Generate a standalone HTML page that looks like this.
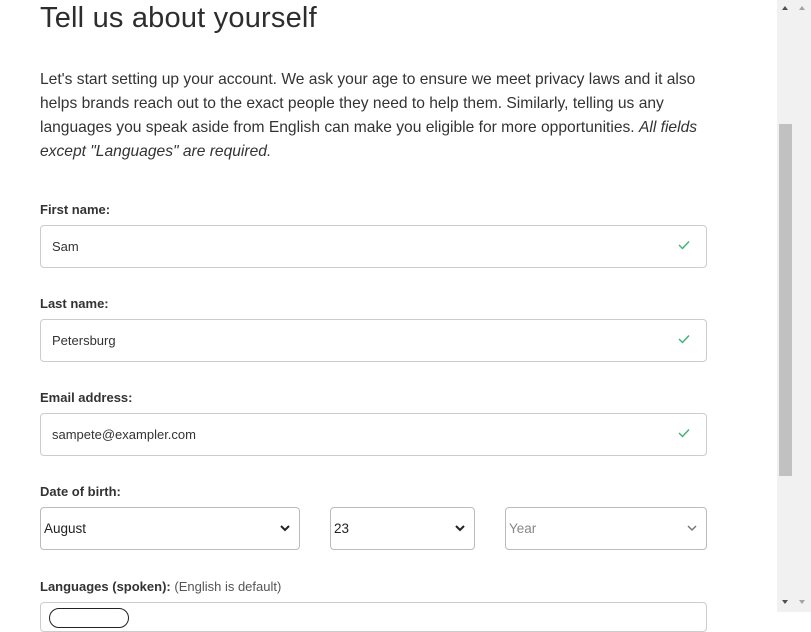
<!DOCTYPE html>
<html><head><meta charset="utf-8"><style>
*{box-sizing:border-box;margin:0;padding:0}
body{width:811px;height:612px;overflow:hidden;background:#fff;font-family:"Liberation Sans",sans-serif;color:#333;position:relative}
.a{position:absolute}
h1{position:absolute;left:40px;top:2px;font-size:29px;font-weight:normal;color:#2d2d2d;letter-spacing:0.2px;white-space:nowrap}
p{position:absolute;left:40px;top:68px;width:676px;font-size:15.6px;line-height:24px;color:#333}
.lbl{position:absolute;left:40px;font-size:13px;font-weight:bold;color:#333}
.in{position:absolute;left:40px;width:667px;height:43px;border:1px solid #ccc;border-radius:4px;font-size:13px;padding-left:11px;line-height:41px;color:#333}
.ck{position:absolute;right:16px;top:14px}
.sel{position:absolute;height:43px;border:1px solid #bbb;border-radius:4px;font-size:13.5px;padding-left:3px;line-height:41px;color:#222}
.sel svg{position:absolute;right:9px;top:17px}
</style></head><body>
<h1>Tell us about yourself</h1>
<p>Let's start setting up your account. We ask your age to ensure we meet privacy laws and it also helps brands reach out to the exact people they need to help them. Similarly, telling us any languages you speak aside from English can make you eligible for more opportunities. <i>All fields except "Languages" are required.</i></p>

<div class="lbl" style="top:202px">First name:</div>
<div class="in" style="top:225px">Sam<svg class="ck" width="12" height="10" viewBox="0 0 12 10"><path d="M1 5l3.5 3.5L11 1.5" fill="none" stroke="#3cb46e" stroke-width="1.4"/></svg></div>

<div class="lbl" style="top:296px">Last name:</div>
<div class="in" style="top:319px">Petersburg<svg class="ck" width="12" height="10" viewBox="0 0 12 10"><path d="M1 5l3.5 3.5L11 1.5" fill="none" stroke="#3cb46e" stroke-width="1.4"/></svg></div>

<div class="lbl" style="top:390px">Email address:</div>
<div class="in" style="top:413px">sampete@exampler.com<svg class="ck" width="12" height="10" viewBox="0 0 12 10"><path d="M1 5l3.5 3.5L11 1.5" fill="none" stroke="#3cb46e" stroke-width="1.4"/></svg></div>

<div class="lbl" style="top:484px">Date of birth:</div>
<div class="sel" style="top:507px;left:40px;width:260px">August<svg width="10" height="7" viewBox="0 0 10 7"><path d="M1 1l4 4 4-4" fill="none" stroke="#222" stroke-width="2"/></svg></div>
<div class="sel" style="top:507px;left:330px;width:145px">23<svg width="10" height="7" viewBox="0 0 10 7"><path d="M1 1l4 4 4-4" fill="none" stroke="#222" stroke-width="2"/></svg></div>
<div class="sel" style="top:507px;left:505px;width:202px;color:#888">Year<svg width="10" height="7" viewBox="0 0 10 7"><path d="M1 1l4 4 4-4" fill="none" stroke="#777" stroke-width="1.5"/></svg></div>

<div class="lbl" style="top:579px">Languages (spoken): <span style="font-weight:normal;color:#555">(English is default)</span></div>
<div class="in" style="top:602px;height:30px"></div>
<div class="a" style="left:49px;top:608px;width:80px;height:20px;border:1.5px solid #222;border-radius:10px"></div>

<div class="a" style="left:777px;top:0;width:34px;height:612px;background:#f1f1f1"></div>
<div class="a" style="left:779px;top:124px;width:13px;height:352px;background:#c1c1c1"></div>
<div class="a" style="left:782px;top:6px;width:0;height:0;border-left:3.5px solid transparent;border-right:3.5px solid transparent;border-bottom:4px solid #505050"></div>
<div class="a" style="left:799px;top:6px;width:0;height:0;border-left:3.5px solid transparent;border-right:3.5px solid transparent;border-bottom:4px solid #a3a3a3"></div>
<div class="a" style="left:782px;top:600px;width:0;height:0;border-left:3.5px solid transparent;border-right:3.5px solid transparent;border-top:4px solid #505050"></div>
<div class="a" style="left:799px;top:600px;width:0;height:0;border-left:3.5px solid transparent;border-right:3.5px solid transparent;border-top:4px solid #a3a3a3"></div>
</body></html>
